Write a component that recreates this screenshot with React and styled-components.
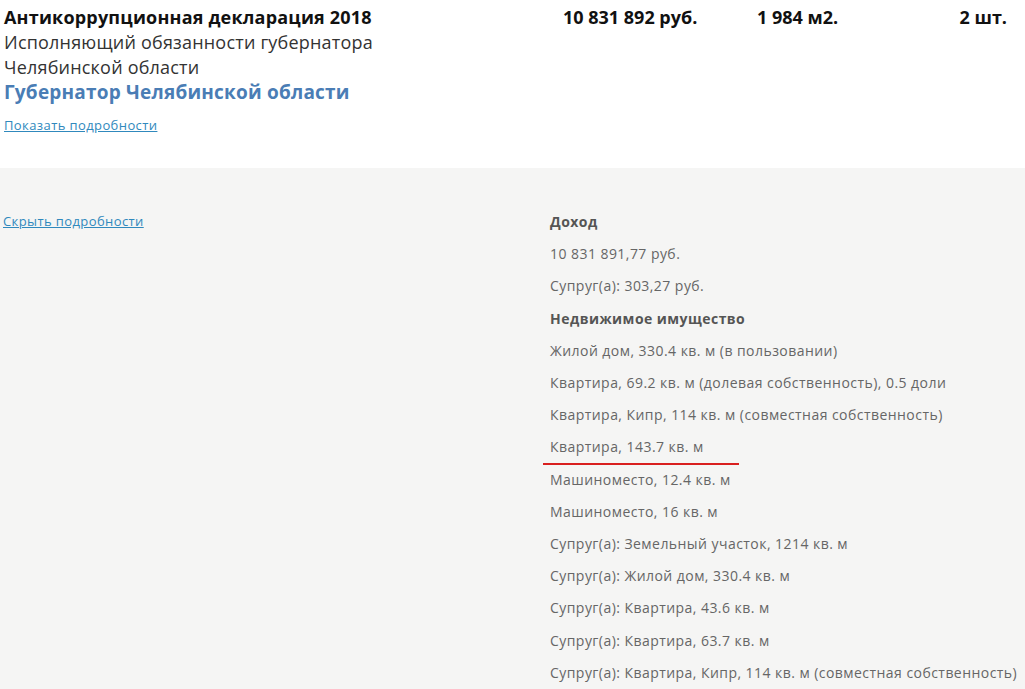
import React from "react";
import styled, { createGlobalStyle } from "styled-components";

const Global = createGlobalStyle`
  html, body { margin: 0; padding: 0; background: #fff; }
  body { font-family: "Open Sans", "Noto Sans", sans-serif; }
`;

const Page = styled.div`
  width: 1025px;
  height: 689px;
  overflow: hidden;
`;

const Summary = styled.section`
  display: grid;
  grid-template-columns: 559px 194px 1fr;
  padding: 5px 18px 0 4px;
  height: 163px;
  background: #fff;
`;

const Info = styled.div`
  display: flex;
  flex-direction: column;
`;

const Title = styled.div`
  font-size: ${(p) => p.$size || 18}px;
  line-height: 25px;
  letter-spacing: 0.2px;
  font-weight: ${(p) => (p.$bold ? 700 : 400)};
  color: ${(p) => p.$color || "#222"};
`;

const Stat = styled.div`
  font-size: 18px;
  line-height: 25px;
  font-weight: 700;
  color: #111;
  text-align: ${(p) => (p.$right ? "right" : "left")};
`;

const StatInner = styled.span`
  float: left;
`;

const DetailLink = styled.a`
  font-size: 13px;
  line-height: 18px;
  letter-spacing: 0.4px;
  color: #3089bd;
  text-decoration: underline;
  margin-top: ${(p) => p.$top || 0}px;
  cursor: pointer;
`;

const Details = styled.section`
  display: grid;
  grid-template-columns: 546px 1fr;
  padding: 38px 0 0 3px;
  background: #f5f5f4;
  height: 500px;
`;

const LeftCol = styled.div`
  padding-top: 3px;
`;

const List = styled.div`
  display: flex;
  flex-direction: column;
  padding-left: 1px;
`;

const Row = styled.div`
  position: relative;
  font-size: 14px;
  letter-spacing: 0.45px;
  line-height: 32.2px;
  white-space: nowrap;
  font-weight: ${(p) => (p.$head ? 700 : 400)};
  color: ${(p) => (p.$head ? "#555" : "#666")};

  ${(p) =>
    p.$mark &&
    `
    &::after {
      content: "";
      position: absolute;
      left: -7px;
      bottom: -1px;
      width: 196px;
      height: 2px;
      background: #d9201f;
    }
  `}
`;

const rows = [
  { t: "Доход", head: true },
  { t: "10 831 891,77 руб." },
  { t: "Супруг(а): 303,27 руб." },
  { t: "Недвижимое имущество", head: true },
  { t: "Жилой дом, 330.4 кв. м (в пользовании)" },
  { t: "Квартира, 69.2 кв. м (долевая собственность), 0.5 доли" },
  { t: "Квартира, Кипр, 114 кв. м (совместная собственность)" },
  { t: "Квартира, 143.7 кв. м", mark: true },
  { t: "Машиноместо, 12.4 кв. м" },
  { t: "Машиноместо, 16 кв. м" },
  { t: "Супруг(а): Земельный участок, 1214 кв. м" },
  { t: "Супруг(а): Жилой дом, 330.4 кв. м" },
  { t: "Супруг(а): Квартира, 43.6 кв. м" },
  { t: "Супруг(а): Квартира, 63.7 кв. м" },
  { t: "Супруг(а): Квартира, Кипр, 114 кв. м (совместная собственность)" },
];

export default function App() {
  return (
    <Page>
      <Global />
      <Summary>
        <Info>
          <Title $bold $color="#111">Антикоррупционная декларация 2018</Title>
          <Title $color="#333">Исполняющий обязанности губернатора</Title>
          <Title $color="#333">Челябинской области</Title>
          <Title $bold $size={19} $color="#4a7db5">Губернатор Челябинской области</Title>
          <DetailLink $top={11}>Показать подробности</DetailLink>
        </Info>
        <Stat>10 831 892 руб.</Stat>
        <Stat $right>
          <StatInner>1 984 м2.</StatInner>2 шт.
        </Stat>
      </Summary>
      <Details>
        <LeftCol>
          <DetailLink>Скрыть подробности</DetailLink>
        </LeftCol>
        <List>
          {rows.map((r, i) => (
            <Row key={i} $head={r.head} $mark={r.mark}>
              {r.t}
            </Row>
          ))}
        </List>
      </Details>
    </Page>
  );
}
